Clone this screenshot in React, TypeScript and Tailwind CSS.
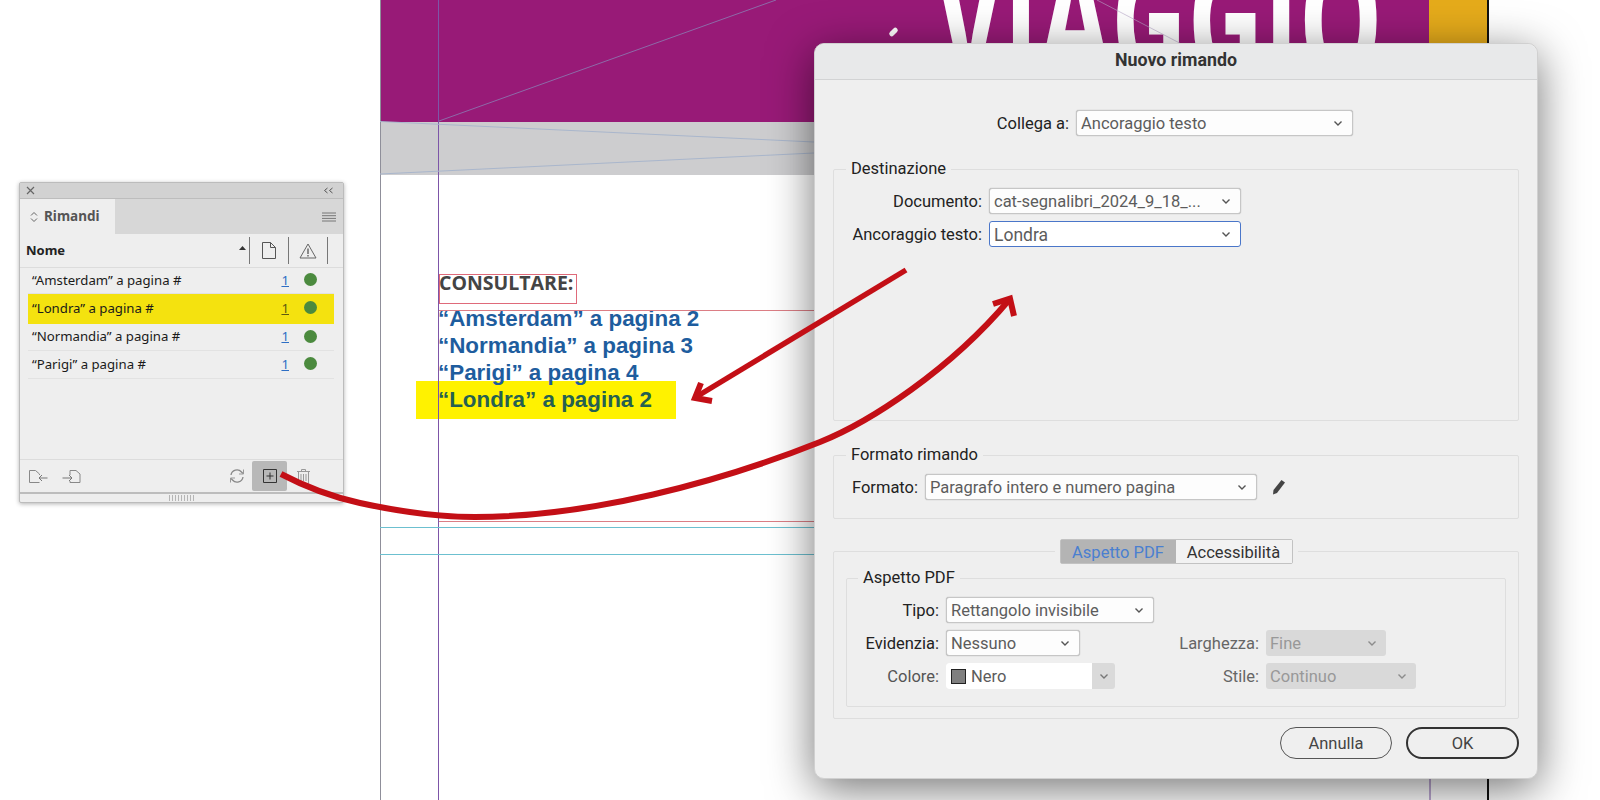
import React from 'react';

const RED = '#c30f16';

function Chevron({ color = '#555' }: { color?: string }) {
  return (
    <svg width="10" height="7" viewBox="0 0 10 7" fill="none" className="shrink-0">
      <path d="M1.5 1.5 5 5l3.5-3.5" stroke={color} strokeWidth="1.4" />
    </svg>
  );
}

function Select({ text, width, focus, disabled }: { text: string; width: string; focus?: boolean; disabled?: boolean }) {
  let tone = 'bg-[#fdfdfd] border border-[#c6c6c6] text-[#5c5c5c] shadow-[0_0_1px_#9a9a9a]';
  if (focus) tone = 'bg-white border-[1.5px] border-[#4a76c9] text-[#5c5c5c] text-[17.5px]';
  if (disabled) tone = 'bg-[#d9d9d9] text-[#989898]';
  return (
    <div className={`${width} ${tone} h-[26px] rounded-[3px] flex items-center justify-between pl-[4px] pr-[9px] shrink-0`}>
      <span className="pt-[2px]">{text}</span>
      <Chevron color={disabled ? '#8c8c8c' : '#555'} />
    </div>
  );
}

function Label({ text, width, tone = 'text-[#222]' }: { text: string; width: string; tone?: string }) {
  return <span className={`${width} ${tone} pt-[2px] text-right shrink-0`}>{text}</span>;
}

function Row({ name, height, active }: { name: string; height: string; active?: boolean }) {
  return (
    <div className={`${height} flex items-center border-b ${active ? 'bg-[#f4e20f] border-transparent' : 'border-[#e2e2e2]'}`}>
      <span className="ml-[4px] flex-1 text-[#1a1a1a]">{name}</span>
      <span className={`underline mr-[15px] ${active ? 'text-[#5d5a10]' : 'text-[#2d6ec4]'}`}>1</span>
      <span className="w-[13px] h-[13px] rounded-full bg-[#4b8a3e] mr-[17px] mb-[2px]"></span>
    </div>
  );
}

function Panel() {
  return (
    <div className="absolute left-[19px] top-[182px] w-[325px] h-[321px] flex flex-col bg-[#eeeeee] border border-[#bcbcbc] rounded-[2px] shadow-[0_1px_4px_rgba(0,0,0,0.3)] text-[13.2px] font-['Noto_Sans',sans-serif]">
      <div className="h-[16px] bg-[#d2d2d2] border-b border-[#bdbdbd] flex items-center justify-between pl-[6px] pr-[9px] shrink-0">
        <svg width="9" height="9" viewBox="0 0 9 9"><path d="M1 1l7 7M8 1 1 8" stroke="#666" strokeWidth="1.2" /></svg>
        <svg width="11" height="7" viewBox="0 0 11 7" fill="none"><path d="M4.5 1 1.5 3.5l3 2.5M9.5 1l-3 2.5 3 2.5" stroke="#555" /></svg>
      </div>
      <div className="h-[35px] bg-[#d7d7d7] flex items-stretch shrink-0">
        <div className="w-[95px] bg-[#eeeeee] flex items-center gap-[6px] pl-[10px] font-bold text-[#555] text-[13.5px]">
          <svg width="8" height="12" viewBox="0 0 8 12" fill="none"><path d="M1 4.5 4 1.5l3 3M1 7.5l3 3 3-3" stroke="#666" /></svg>
          Rimandi
        </div>
        <div className="flex-1 flex items-center justify-end pr-[7px]">
          <svg width="14" height="10" viewBox="0 0 14 10"><path d="M0 1h14M0 3.7h14M0 6.4h14M0 9h14" stroke="#777" /></svg>
        </div>
      </div>
      <div className="h-[34px] flex items-center border-b border-[#dcdcdc] shrink-0">
        <span className="ml-[6px] font-bold text-[#222] text-[13px] flex-1">Nome</span>
        <svg width="7" height="4" viewBox="0 0 7 4" className="mb-[6px] mr-[3px]"><path d="M0 4 3.5 0 7 4z" fill="#333" /></svg>
        <span className="w-px h-[27px] bg-[#777]"></span>
        <svg width="16" height="17" viewBox="0 0 16 17" fill="none" className="mx-[11px]"><path d="M1.5.5h8l5 5v11h-13zM9.5.5v5h5" stroke="#555" /></svg>
        <span className="w-px h-[27px] bg-[#777]"></span>
        <svg width="18" height="16" viewBox="0 0 18 16" fill="none" className="mx-[10px]"><path d="M9 1 17 15H1z" stroke="#666" /><path d="M9 5.5V11M9 12v1.5" stroke="#555" strokeWidth="1.3" /></svg>
        <span className="w-px h-[27px] bg-[#777] mr-[15px]"></span>
      </div>
      <div className="flex-1 pl-[8px] pr-[9px]">
        <Row name="“Amsterdam” a pagina #" height="h-[26px]" />
        <Row name="“Londra” a pagina #" height="h-[30px]" active />
        <Row name="“Normandia” a pagina #" height="h-[27px]" />
        <Row name="“Parigi” a pagina #" height="h-[28px]" />
      </div>
      <div className="h-[33px] border-t border-[#dcdcdc] flex items-center shrink-0">
        <svg width="20" height="13" viewBox="0 0 20 13" fill="none" className="ml-[8px]"><path d="M1.5 12.5V.5h6l4 3.5v1M1.5 12.5h10" stroke="#888" /><path d="M19.5 8H11M14 5 11 8l3 3" stroke="#777" /></svg>
        <svg width="20" height="13" viewBox="0 0 20 13" fill="none" className="ml-[14px]"><path d="M8 5V.5h6l4 3.5v8.500H8V11" stroke="#888" /><path d="M.5 8H10M7 5l3 3-3 3" stroke="#777" /></svg>
        <svg width="16" height="16" viewBox="0 0 16 16" fill="none" className="ml-[147px]"><path d="M2 7a6 6 0 0 1 10.500-3L14 5.500M14 9a6 6 0 0 1-10.500 3L2 10.500" stroke="#888" strokeWidth="1.300" /><path d="M14.500 1.500v4.500H10M1.500 14.500V10H6" stroke="#999" /></svg>
        <div className="ml-[7px] w-[35px] h-[30px] bg-[#b8b8b8] rounded-[2px] flex items-center justify-center">
          <svg width="14" height="14" viewBox="0 0 14 14" fill="none"><path d="M.5.5h13v13H.5z" stroke="#333" /><path d="M7 3.500v7M3.500 7h7" stroke="#333" /></svg>
        </div>
        <svg width="13" height="15" viewBox="0 0 13 15" fill="none" className="ml-[10px]"><path d="M0 2.500h13M4.500 2.500V.500h4v2M1.500 2.500v12h10v-12M4 5v7M6.500 5v7M9 5v7" stroke="#999" /></svg>
      </div>
      <div className="h-[10px] border-t-2 border-[#bdbdbd] flex justify-center items-center shrink-0">
        <div className="w-[25px] h-[6px] bg-[repeating-linear-gradient(90deg,#b5b5b5_0,#b5b5b5_1px,transparent_1px,transparent_3px)]"></div>
      </div>
    </div>
  );
}

function PageCanvas() {
  return (
    <div className="absolute left-[380px] top-0 w-[1109px] h-[800px] bg-white border-l border-[#8f8f9a] border-r-2 border-r-[#111]">
      <div className="h-[122px] bg-[#981a77] relative">
        <div className="absolute left-[554px] top-0 w-[460px] h-[44px] overflow-hidden">
          <div className="mt-[-70px] origin-left scale-x-[0.62] text-white font-bold text-[170px] leading-[170px] font-['Open_Sans',sans-serif] whitespace-nowrap">VIAGGIO</div>
        </div>
        <span className="absolute left-[510px] top-[27px] w-[5px] h-[10px] bg-white rounded-full rotate-[45deg]"></span>
        <div className="absolute left-[1048px] top-0 bottom-0 right-0 bg-[#e5ab1b]"></div>
      </div>
      <div className="h-[53px] bg-[#cdcdcf]"></div>
    </div>
  );
}

function PageText() {
  return (
    <div className="absolute left-[439px] top-[274px] w-[380px]">
      <div className="w-[138px] h-[30px] border border-[#df6a7a] font-['Open_Sans',sans-serif] font-bold text-[19.500px] leading-[15px] text-[#444] -indent-px whitespace-nowrap">CONSULTARE:</div>
      <div className="mt-[1px] -ml-px font-['Liberation_Sans',sans-serif] font-bold text-[22.400px] leading-[27px] text-[#1e5d9e]">
        <div>“Amsterdam” a pagina 2</div>
        <div>“Normandia” a pagina 3</div>
        <div className="relative z-10">“Parigi” a pagina 4</div>
        <div className="relative"><span className="absolute left-[-22px] top-[-5px] w-[260px] h-[38px] bg-[#fff200]"></span><span className="relative text-[#256051]">“Londra” a pagina 2</span></div>
      </div>
    </div>
  );
}

function Guides() {
  return (
    <svg className="absolute left-0 top-0 pointer-events-none" width="1600" height="800" viewBox="0 0 1600 800" fill="none">
      <path d="M438.500 0V800" stroke="#7d55a8" />
      <path d="M1430 779V800" stroke="#7d55a8" />
      <path d="M439 121 776 0" stroke="#8d6aa8" />
      <path d="M1097 0 1193 50" stroke="#b8a6c8" strokeOpacity="0.6" />
      <path d="M380 121.500 814 142M380 174 814 153" stroke="#a9b6cc" />
      <path d="M439 310.500H814M439 521.500H814" stroke="#dc7e85" />
      <path d="M380 527.500H814M380 554.500H814" stroke="#6cc0d0" />
    </svg>
  );
}

function Arrows() {
  return (
    <svg className="absolute left-0 top-0 pointer-events-none" width="1600" height="800" viewBox="0 0 1600 800" fill="none">
      <path d="M906 270 696 397" stroke={RED} strokeWidth="5.500" />
      <path d="M701 383 695 398 712 401" stroke={RED} strokeWidth="6" />
      <path
        d="M281 474C300 484 328 496 360 503C392 510 435 517 475 517C590 517 720 482 820 442C870 422 950 370 1009 300"
        stroke={RED}
        strokeWidth="6"
      />
      <path d="M993 304 1010 298.500 1014 316" stroke={RED} strokeWidth="6" />
    </svg>
  );
}

function Dialog() {
  return (
    <div className="absolute left-[814px] top-[43px] w-[724px] h-[736px] flex flex-col bg-[#efefef] rounded-[10px] border border-[#d0d0d0] shadow-[0_10px_45px_rgba(0,0,0,0.55)] font-['Roboto',sans-serif] text-[16.500px] leading-[20px] text-[#222]">
      <div className="h-[36px] pb-[4px] bg-[#e8e9ea] border-b border-[#d2d3d4] rounded-t-[10px] flex items-center justify-center font-bold text-[17.800px] text-[#333] shrink-0">Nuovo rimando</div>

      <div className="mt-[30px] flex items-center gap-[7px]">
        <Label text="Collega a:" width="w-[254px]" />
        <Select text="Ancoraggio testo" width="w-[277px]" />
      </div>

      <fieldset className="mt-[23px] mx-[18px] h-[262px] border border-[#dedede] rounded-[2px]">
        <legend className="ml-[12px] px-[5px]">Destinazione</legend>
        <div className="pt-[9px] flex flex-col gap-[7px]">
          <div className="flex items-center gap-[7px]">
            <Label text="Documento:" width="w-[148px]" />
            <Select text="cat-segnalibri_2024_9_18_..." width="w-[252px]" />
          </div>
          <div className="flex items-center gap-[7px]">
            <Label text="Ancoraggio testo:" width="w-[148px]" />
            <Select text="Londra" width="w-[252px]" focus />
          </div>
        </div>
      </fieldset>

      <fieldset className="mt-[24px] mx-[18px] h-[74px] border border-[#dedede] rounded-[2px]">
        <legend className="ml-[12px] px-[5px]">Formato rimando</legend>
        <div className="pt-[9px] flex items-center gap-[7px]">
          <Label text="Formato:" width="w-[84px]" />
          <Select text="Paragrafo intero e numero pagina" width="w-[332px]" />
          <svg width="14" height="16" viewBox="0 0 14 16" className="ml-[8px]"><path d="M9.500 1 13 3.500 5 14l-4 1.500L1.500 11z" fill="#444" /></svg>
        </div>
      </fieldset>

      <fieldset className="mt-[20px] mx-[18px] h-[180px] border border-[#dedede] rounded-[2px]">
        <legend className="mx-auto px-[5px]">
          <div className="flex h-[25px] border border-[#c2c2c2] rounded-[2px]">
            <div className="w-[115px] pt-[2px] bg-[#b4b4b4] text-[#4a7fd0] flex items-center justify-center">Aspetto PDF</div>
            <div className="w-[116px] pt-[2px] bg-[#f2f2f2] text-[#333] flex items-center justify-center">Accessibilità</div>
          </div>
        </legend>
        <fieldset className="mx-[12px] mt-[4px] h-[139px] border border-[#dedede] rounded-[2px]">
          <legend className="ml-[11px] px-[5px]">Aspetto PDF</legend>
          <div className="pt-[9px] flex flex-col gap-[7px]">
            <div className="flex items-center gap-[7px]">
              <Label text="Tipo:" width="w-[92px]" />
              <Select text="Rettangolo invisibile" width="w-[208px]" />
            </div>
            <div className="flex items-center gap-[7px]">
              <Label text="Evidenzia:" width="w-[92px]" />
              <Select text="Nessuno" width="w-[134px]" />
              <Label text="Larghezza:" width="w-[172px]" tone="text-[#666]" />
              <Select text="Fine" width="w-[120px]" disabled />
            </div>
            <div className="flex items-center gap-[7px]">
              <Label text="Colore:" width="w-[92px]" tone="text-[#555]" />
              <div className="w-[169px] h-[26px] rounded-[3px] bg-[#dadada] flex items-center shrink-0">
                <div className="w-[146px] h-full bg-white rounded-l-[3px] flex items-center gap-[5px] pl-[5px] text-[#5c5c5c]">
                  <span className="w-[15px] h-[15px] bg-[#7f7f7f] border border-[#222]"></span>
                  <span className="pt-[2px]">Nero</span>
                </div>
                <div className="flex-1 flex justify-center"><Chevron color="#777" /></div>
              </div>
              <Label text="Stile:" width="w-[137px]" tone="text-[#666]" />
              <Select text="Continuo" width="w-[150px]" disabled />
            </div>
          </div>
        </fieldset>
      </fieldset>

      <div className="mt-[8px] mr-[18px] flex justify-end gap-[14px]">
        <div className="w-[112px] h-[32px] pt-[1px] rounded-full border border-[#555] flex items-center justify-center text-[#444]">Annulla</div>
        <div className="w-[113px] h-[32px] pt-[1px] rounded-full border-2 border-[#333] flex items-center justify-center text-[#444]">OK</div>
      </div>
    </div>
  );
}

export default function App() {
  return (
    <div className="relative w-[1600px] h-[800px] bg-white overflow-hidden">
      <PageCanvas />
      <PageText />
      <Guides />
      <Panel />
      <Dialog />
      <Arrows />
    </div>
  );
}
